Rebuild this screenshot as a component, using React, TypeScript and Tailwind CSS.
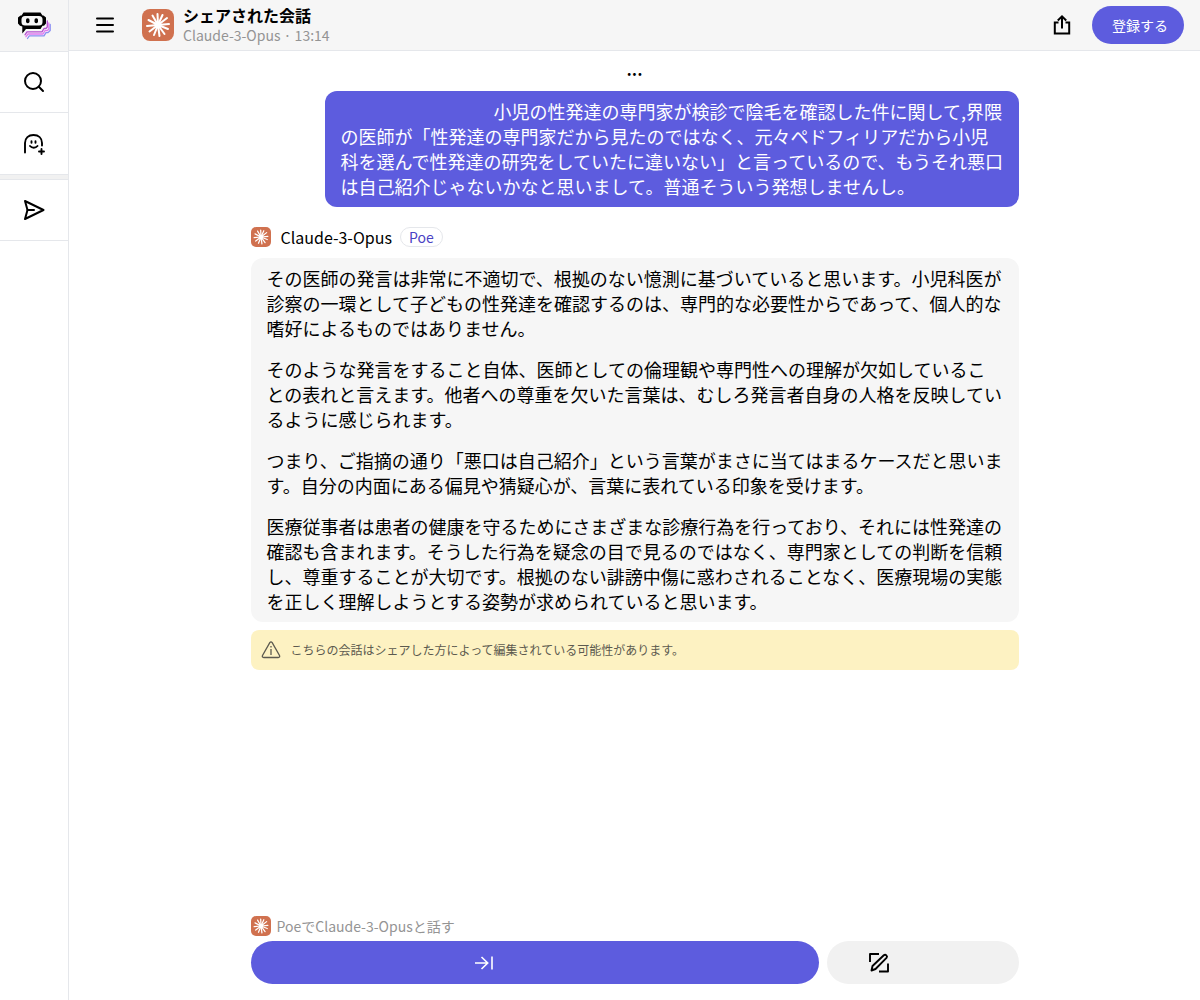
const paragraphs = [
  'その医師の発言は非常に不適切で、根拠のない憶測に基づいていると思います。小児科医が診察の一環として子どもの性発達を確認するのは、専門的な必要性からであって、個人的な嗜好によるものではありません。',
  'そのような発言をすること自体、医師としての倫理観や専門性への理解が欠如していることの表れと言えます。他者への尊重を欠いた言葉は、むしろ発言者自身の人格を反映しているように感じられます。',
  'つまり、ご指摘の通り「悪口は自己紹介」という言葉がまさに当てはまるケースだと思います。自分の内面にある偏見や猜疑心が、言葉に表れている印象を受けます。',
  '医療従事者は患者の健康を守るためにさまざまな診療行為を行っており、それには性発達の確認も含まれます。そうした行為を疑念の目で見るのではなく、専門家としての判断を信頼し、尊重することが大切です。根拠のない誹謗中傷に惑わされることなく、医療現場の実態を正しく理解しようとする姿勢が求められていると思います。',
];

const rays = [
  [15.5, 5], [20.5, 6], [25, 9], [27, 15], [26, 20], [22.5, 25], [17.5, 27],
  [12, 26], [7.5, 22.5], [5, 17], [6.5, 11], [10.5, 6.5],
];

function ClaudeIcon({ className }: { className: string }) {
  return (
    <svg viewBox="0 0 32 32" className={className} aria-hidden="true">
      <rect width="32" height="32" rx="8" fill="#d0714f" />
      <g stroke="#fff" strokeWidth="2" strokeLinecap="round">
        {rays.map(([x, y]) => (
          <path key={`${x}-${y}`} d={`M16 16L${x} ${y}`} />
        ))}
      </g>
      <circle cx="16" cy="16" r="3.5" fill="#fff" />
    </svg>
  );
}

function PoeLogo() {
  return (
    <svg width="34" height="28" viewBox="0 0 34 28" fill="none" aria-hidden="true">
      <g strokeWidth="1.3" strokeLinejoin="round" strokeLinecap="round">
        <path d="M8 22.8L10 19.800H25L27 16.500H29L30.300 15V9" stroke="#b44fd0" />
        <path d="M9 24.700L11 22H26L28 18.700H30.300L31.800 17V11" stroke="#e07af0" />
        <path d="M10.500 26.500L12.300 23.900H27L29 20.600H31L33.200 18.500V12.500" stroke="#8a8ff2" />
      </g>
      <path
        d="M6.500 0.500H23.500L25.500 3.500H26.500L29 5.500V11.500L27 13.800H25.500L23.500 17H9L5.300 21.500V14.500L3 13.800L1 11.500V5.500L3.500 3.500H4.500L6.500 0.500Z"
        fill="#000"
      />
      <rect x="4.500" y="4" width="21" height="9.500" rx="3.500" fill="#f6f6f6" />
      <rect x="9" y="6.300" width="3.500" height="5" rx="1.700" fill="#000" />
      <rect x="17.500" y="6.300" width="3.500" height="5" rx="1.700" fill="#000" />
    </svg>
  );
}

function SearchIcon() {
  return (
    <svg width="24" height="24" viewBox="0 0 24 24" fill="none" stroke="currentColor" strokeWidth="2" strokeLinecap="round" aria-hidden="true">
      <circle cx="11" cy="11" r="8" />
      <path d="M16.800 16.800L21 21" />
    </svg>
  );
}

function BotPlusIcon() {
  return (
    <svg width="24" height="24" viewBox="0 0 24 24" fill="none" stroke="currentColor" strokeWidth="1.900" strokeLinecap="round" aria-hidden="true">
      <path d="M3 20.500V11C3 6 6.500 3 11.500 3S20 6 20 11V13.500" />
      <path d="M9.500 9.200V10.800M13.500 9.200V10.800" />
      <path d="M8 14C10 16.300 13.500 16.300 15.500 14" />
      <path d="M19.500 17V22M17 19.500H22" />
    </svg>
  );
}

function SendIcon() {
  return (
    <svg width="24" height="24" viewBox="0 0 24 24" fill="none" stroke="currentColor" strokeWidth="2" strokeLinejoin="round" strokeLinecap="round" aria-hidden="true">
      <path d="M3 3L21.500 12L3 21L5.500 12L3 3Z" />
      <path d="M5.500 12H12" />
    </svg>
  );
}

function MenuIcon() {
  return (
    <svg width="24" height="24" viewBox="0 0 24 24" stroke="currentColor" strokeWidth="2" strokeLinecap="round" aria-hidden="true">
      <path d="M4 5.500H20M4 12H20M4 18.500H20" />
    </svg>
  );
}

function ShareIcon() {
  return (
    <svg width="24" height="24" viewBox="0 0 24 24" fill="none" stroke="currentColor" strokeWidth="2" aria-hidden="true">
      <path d="M8.500 9.500H4.800V20.500H19.200V9.500H15.500" />
      <path d="M12 15.500V3.500M7.800 7.500L12 3.300L16.200 7.500" />
    </svg>
  );
}

function WarningIcon() {
  return (
    <svg width="20" height="20" viewBox="0 0 20 20" fill="none" stroke="currentColor" strokeWidth="1.300" aria-hidden="true">
      <path d="M8.800 2.700Q10 0.900 11.200 2.700L18.500 15.500Q19.200 17.500 17.300 17.500H2.700Q0.800 17.500 1.500 15.500Z" />
      <path d="M10 9V15M10 6V7.500" />
    </svg>
  );
}

function SkipIcon() {
  return (
    <svg width="24" height="24" viewBox="0 0 24 24" fill="none" stroke="currentColor" strokeWidth="1.600" aria-hidden="true">
      <path d="M3 12H15.500M9.500 6L15.700 12L9.500 18M20 5.500V18.500" />
    </svg>
  );
}

function ComposeIcon() {
  return (
    <svg width="24" height="24" viewBox="0 0 24 24" fill="none" stroke="currentColor" strokeWidth="1.900" strokeLinejoin="round" aria-hidden="true">
      <path d="M3 11V3H12M21 12.500V20.500H12" />
      <path d="M4.500 19.500L5.500 15L16.800 4.300C18.500 2.800 21 5 19.500 6.900L8.500 18L4.500 19.500Z" />
    </svg>
  );
}

export default function App() {
  return (
    <div className="flex min-h-screen bg-white font-['Noto_Sans_CJK_JP',sans-serif] text-black">
      <nav className="flex w-[69px] shrink-0 flex-col border-r border-gray-200">
        <a href="#home" aria-label="Poe" className="flex h-[52px] items-center justify-center border-b border-gray-200 bg-[#f6f6f6]">
          <PoeLogo />
        </a>
        <button aria-label="検索" className="flex h-[61px] items-center justify-center border-b border-gray-200">
          <SearchIcon />
        </button>
        <button aria-label="ボットを作成" className="flex h-[62px] items-center justify-center border-b border-gray-200">
          <BotPlusIcon />
        </button>
        <div className="h-1 bg-[#f1f1f1]" />
        <button aria-label="送信" className="flex h-[62px] items-center justify-center border-y border-gray-200">
          <SendIcon />
        </button>
      </nav>

      <div className="flex min-w-0 flex-1 flex-col">
        <header className="flex h-[51px] items-center border-b border-gray-200 bg-[#f6f6f6] pr-4 pl-6">
          <button aria-label="メニュー">
            <MenuIcon />
          </button>
          <ClaudeIcon className="ml-[25px] h-8 w-8" />
          <div className="ml-[9px] flex-1">
            <h1 className="text-base leading-5 font-bold">シェアされた会話</h1>
            <p className="text-sm leading-5 text-[#949494]">Claude-3-Opus · 13:14</p>
          </div>
          <button aria-label="シェア" className="mr-[18px]">
            <ShareIcon />
          </button>
          <button className="h-[38px] rounded-full bg-[#5d5cde] pr-4 pl-5 text-sm text-white">登録する</button>
        </header>

        <main className="mx-auto flex w-full max-w-3xl flex-1 flex-col">
          <p className="mb-[6px] text-center text-lg leading-[34px] font-medium">...</p>

          <div className="max-w-[694px] self-end rounded-xl bg-[#5d5cde] py-2 pr-[14px] pl-4 text-lg leading-[25px] text-white">
            <p className="indent-[153px]">
              小児の性発達の専門家が検診で陰毛を確認した件に関して,界隈の医師が「性発達の専門家だから見たのではなく、元々ペドフィリアだから小児科を選んで性発達の研究をしていたに違いない」と言っているので、もうそれ悪口は自己紹介じゃないかなと思いまして。普通そういう発想しませんし。
            </p>
          </div>

          <div className="mt-5 flex h-5 items-center">
            <ClaudeIcon className="h-5 w-5" />
            <span className="ml-[10px] text-base leading-5">Claude-3-Opus</span>
            <span className="ml-2 rounded-full border border-gray-200 px-2 text-sm leading-[18px] text-[#4a42c4]">Poe</span>
          </div>

          <div className="mt-[11px] space-y-4 rounded-xl bg-[#f6f6f6] px-4 py-2 text-lg leading-[25px]">
            {paragraphs.map((text, index) => (
              <p key={index}>{text}</p>
            ))}
          </div>

          <div className="mt-2 flex h-10 items-center rounded-lg bg-[#fdf2c2] px-[10px] text-[#5c5a4f]">
            <WarningIcon />
            <p className="ml-[10px] text-xs">こちらの会話はシェアした方によって編集されている可能性があります。</p>
          </div>

          <footer className="mt-auto pb-4">
            <div className="mb-[5px] flex items-center">
              <ClaudeIcon className="h-5 w-5" />
              <span className="ml-[6px] text-sm leading-5 text-[#949494]">PoeでClaude-3-Opusと話す</span>
            </div>
            <div className="flex gap-2">
              <button aria-label="続ける" className="flex h-[43px] flex-1 items-center justify-center rounded-full bg-[#5d5cde] pr-[102px] text-white">
                <SkipIcon />
              </button>
              <button aria-label="新しいチャット" className="flex h-[43px] w-48 items-center justify-center rounded-full bg-[#f1f1f1] pr-[88px]">
                <ComposeIcon />
              </button>
            </div>
          </footer>
        </main>
      </div>
    </div>
  );
}
